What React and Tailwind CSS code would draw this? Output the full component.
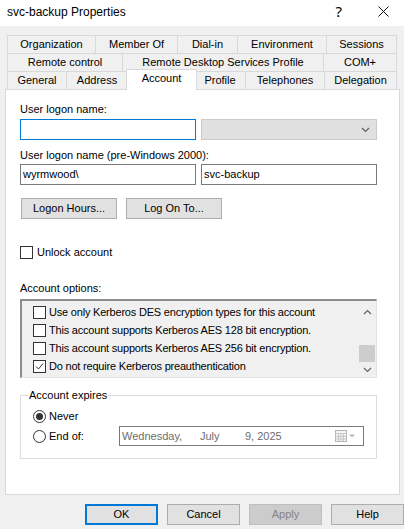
import React from "react";

const row1 = [
  ["Organization", 89],
  ["Member Of", 82],
  ["Dial-in", 60],
  ["Environment", 89],
  ["Sessions", 70],
];
const row2 = [
  ["Remote control", 116],
  ["Remote Desktop Services Profile", 201],
  ["COM+", 73],
];
const row3 = [
  ["General", 60],
  ["Address", 61],
  ["Account", 67],
  ["Profile", 51],
  ["Telephones", 79],
  ["Delegation", 72],
];

const options = [
  ["Use only Kerberos DES encryption types for this account", false],
  ["This account supports Kerberos AES 128 bit encryption.", false],
  ["This account supports Kerberos AES 256 bit encryption.", false],
  ["Do not require Kerberos preauthentication", true],
];

function TabRow({ tabs, selected }) {
  return (
    <div className="flex h-[18px]">
      {tabs.map(([label, w], i) =>
        label === selected ? (
          <div
            key={label}
            style={{ width: w + 4 }}
            className="relative z-10 -mx-[2px] -mt-[2px] h-[21px] bg-white border-t border-l border-r border-[#d9d9d9] flex justify-center pt-[1px]"
          >
            <span className="leading-[15px]">{label}</span>
          </div>
        ) : (
          <div
            key={label}
            style={{ width: w }}
            className={`h-[18px] border-t border-r border-[#d9d9d9] flex items-center justify-center ${
              i === 0 ? "border-l" : ""
            }`}
          >
            {label}
          </div>
        )
      )}
    </div>
  );
}

function Check({ checked }) {
  return (
    <span className="w-[13px] h-[13px] border border-[#333333] bg-white flex items-center justify-center shrink-0">
      {checked && (
        <svg width="11" height="11" viewBox="0 0 11 11">
          <path d="M2 5.5 L4.5 8 L9 2.5" stroke="#333" strokeWidth="1" fill="none" />
        </svg>
      )}
    </span>
  );
}

function Radio({ checked }) {
  return (
    <span className="w-[13px] h-[13px] rounded-full border border-[#333333] bg-white flex items-center justify-center shrink-0">
      {checked && <span className="w-[7px] h-[7px] rounded-full bg-[#333333]" />}
    </span>
  );
}

function Chevron({ up }) {
  return (
    <svg width="9" height="6" viewBox="0 0 9 6">
      <path
        d={up ? "M1 5 L4.5 1.5 L8 5" : "M1 1 L4.5 4.5 L8 1"}
        stroke="#606060"
        strokeWidth="1.2"
        fill="none"
      />
    </svg>
  );
}

function Button({ children, variant }) {
  const cls =
    variant === "default"
      ? "border-2 border-[#0078d7] bg-[#e1e1e1] text-black"
      : variant === "disabled"
      ? "border border-[#bfbfbf] bg-[#cccccc] text-[#838383]"
      : "border border-[#adadad] bg-[#e1e1e1] text-black";
  return (
    <div className={`w-[73px] h-[21px] flex items-center justify-center ${cls}`}>
      {children}
    </div>
  );
}

export default function App() {
  return (
    <div className="w-[404px] h-[529px] bg-[#f0f0f0] text-[11px] text-black font-['Liberation_Sans',Arial,sans-serif] flex flex-col overflow-hidden">
      {/* title bar */}
      <div className="h-[26px] bg-white flex items-center shrink-0">
        <span className="ml-[7px] text-[12px] text-black -mt-[3px]">
          svc-backup Properties
        </span>
        <span className="ml-auto mr-[36px] text-[15px] font-['Noto_Sans',sans-serif] -mt-[4px]">?</span>
        <svg width="11" height="11" viewBox="0 0 11 11" className="mr-[15px] -mt-[3px]">
          <path d="M0.5 0.5 L10.5 10.5 M10.5 0.5 L0.5 10.5" stroke="#111" strokeWidth="1" />
        </svg>
      </div>

      {/* tabs */}
      <div className="ml-[7px] mt-[9px] w-[390px]">
        <TabRow tabs={row1} />
        <TabRow tabs={row2} />
        <TabRow tabs={row3} selected="Account" />
      </div>

      {/* panel */}
      <div className="ml-[5px] w-[395px] h-[406px] bg-white border border-[#d9d9d9] pl-[14px] pt-[12px] flex flex-col">
        <div className="leading-[14px]">User logon name:</div>
        <div className="mt-[3px] flex gap-[5px]">
          <div className="w-[176px] h-[21px] border border-[#0078d7] bg-white" />
          <div className="w-[176px] h-[21px] border border-[#cccccc] bg-[#e0e0e0] flex items-center justify-end pr-[6px]">
            <Chevron />
          </div>
        </div>

        <div className="mt-[8px] leading-[14px]">User logon name (pre-Windows 2000):</div>
        <div className="mt-[2px] flex gap-[5px]">
          <div className="w-[176px] h-[21px] border border-[#7a7a7a] bg-white flex items-center pl-[2px]">
            wyrmwood\
          </div>
          <div className="w-[176px] h-[21px] border border-[#7a7a7a] bg-white flex items-center pl-[2px]">
            svc-backup
          </div>
        </div>

        <div className="mt-[13px] flex gap-[9px] ml-px">
          <div className="w-[96px] h-[21px] border border-[#adadad] bg-[#e1e1e1] flex items-center justify-center">
            Logon Hours...
          </div>
          <div className="w-[96px] h-[21px] border border-[#adadad] bg-[#e1e1e1] flex items-center justify-center">
            Log On To...
          </div>
        </div>

        <div className="mt-[27px] flex items-center gap-[4px] h-[13px]">
          <Check />
          <span>Unlock account</span>
        </div>

        <div className="mt-[22px] leading-[14px]">Account options:</div>
        <div className="mt-[4px] w-[357px] h-[79px] bg-[#f0f0f0] border-t-2 border-l-2 border-[#8c8c8c] border-r border-b border-r-[#e3e3e3] border-b-[#e3e3e3] flex">
          <div className="flex-1 pt-[2px] pl-[11px]">
            {options.map(([label, checked]) => (
              <div key={label} className="h-[18px] flex items-center gap-[3px]">
                <Check checked={checked} />
                <span className="whitespace-nowrap tracking-[-0.2px]">{label}</span>
              </div>
            ))}
          </div>
          <div className="w-[16px] mr-px flex flex-col items-center">
            <div className="h-[18px] mt-[2px] flex items-center">
              <Chevron up />
            </div>
            <div className="h-[24px]" />
            <div className="w-full h-[17px] bg-[#cdcdcd]" />
            <div className="flex-1 flex items-center">
              <Chevron />
            </div>
          </div>
        </div>

        <fieldset className="mt-[10px] w-[357px] border border-[#dcdcdc] px-[7px] pb-[12px]">
          <legend className="px-[1px] leading-[14px]">Account expires</legend>
          <div className="ml-[5px] mt-[8px] flex items-center gap-[3px] h-[13px]">
            <Radio checked />
            <span>Never</span>
          </div>
          <div className="ml-[5px] mt-[3px] flex items-center h-[20px]">
            <Radio />
            <span className="ml-[3px] w-[70px]">End of:</span>
            <div className="w-[245px] h-[20px] border border-[#7a7a7a] bg-white flex items-center text-[#6d6d6d] pl-[2px]">
              <span className="w-[78px]">Wednesday,</span>
              <span className="w-[45px]">July</span>
              <span>9, 2025</span>
              <svg width="22" height="12" viewBox="0 0 22 12" className="ml-auto mr-[6px]">
                <rect x="0.5" y="0.5" width="11" height="11" fill="#f4f4f4" stroke="#b5b5b5" />
                <path d="M0.5 3.5 H11.5 M0.5 6.5 H11.5 M0.5 9 H11.5 M3.5 3.5 V11.5 M6 3.5 V11.5 M8.5 3.5 V11.5" stroke="#c8c8c8" strokeWidth="1" />
                <path d="M14 4.5 L20 4.5 L17 7.5 Z" fill="#b5b5b5" />
              </svg>
            </div>
          </div>
        </fieldset>
      </div>

      {/* bottom buttons */}
      <div className="mt-[9px] flex gap-[9px] pl-[85px]">
        <Button variant="default">OK</Button>
        <Button>Cancel</Button>
        <Button variant="disabled">Apply</Button>
        <Button>Help</Button>
      </div>
    </div>
  );
}
